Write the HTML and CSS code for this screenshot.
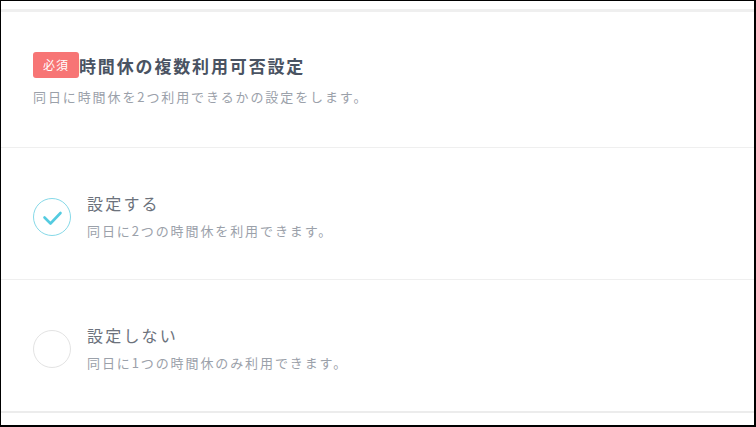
FILE: index.html
```html
<!doctype html>
<html lang="ja">
<head>
  <meta charset="utf-8" />
  <meta name="viewport" content="width=device-width,initial-scale=1" />
  <title>時間休の複数利用可否設定</title>
  <link rel="stylesheet" href="styles.css">
</head>
<body>

<div class="frame">
  <div class="form-block">
    <div class="block-head">
      <div class="head-title">
        <span class="badge">必須</span>
        <h2>時間休の複数利用可否設定</h2>
      </div>
      <p class="head-desc">同日に時間休を2つ利用できるかの設定をします。</p>
    </div>

    <label class="option">
      <span class="radio checked">
        <svg viewBox="0 0 38 38" width="38" height="38"><path d="M11.5 19.5l6 6 10-10.5" fill="none" stroke="#54cbe0" stroke-width="2.6" stroke-linecap="round" stroke-linejoin="round"/></svg>
      </span>
      <span class="option-text">
        <span class="option-title">設定する</span>
        <span class="option-desc">同日に2つの時間休を利用できます。</span>
      </span>
    </label>

    <label class="option">
      <span class="radio"></span>
      <span class="option-text">
        <span class="option-title">設定しない</span>
        <span class="option-desc">同日に1つの時間休のみ利用できます。</span>
      </span>
    </label>
  </div>
</div>

</body>
</html>
```

FILE: styles.css
```css
html,body{margin:0;background:#fff;}
body{font-family:"Noto Sans CJK JP","Noto Sans",sans-serif;color:#4a5362;}
.frame{width:756px;height:427px;box-sizing:border-box;border:solid #000;border-width:1px 2px 2px 1px;padding-top:8px;overflow:hidden;}
.form-block{border-top:3px solid #efefef;border-bottom:2px solid #ececec;}
.block-head{padding:40px 32px;border-bottom:1px solid #efefef;}
.head-title{display:flex;align-items:center;height:26px;}
.badge{display:inline-block;width:46px;height:26px;line-height:26px;text-align:center;background:#f77575;color:#fff;font-size:12px;border-radius:3px;letter-spacing:1px;}
.head-title h2{margin:0;font-size:17px;font-weight:bold;letter-spacing:1.85px;color:#4a5362;}
.head-desc{margin:9px 0 0;font-size:13px;line-height:20px;letter-spacing:1.9px;color:#9ba1aa;}
.option{display:flex;align-items:center;gap:16px;padding:44px 32px 38px;border-bottom:1px solid #efefef;cursor:pointer;}
.option:last-child{border-bottom:none;}
.radio{width:38px;height:38px;box-sizing:border-box;border:1px solid #e3e3e3;border-radius:50%;flex:none;position:relative;}
.radio.checked{border-color:#86d9e8;}
.radio svg{position:absolute;left:-1px;top:-1px;}
.option-text{display:flex;flex-direction:column;gap:7px;}
.option-title{font-size:16px;line-height:22px;letter-spacing:2.2px;color:#6c727c;}
.option-desc{font-size:13px;line-height:20px;letter-spacing:1.9px;color:#9ba1aa;}
```
